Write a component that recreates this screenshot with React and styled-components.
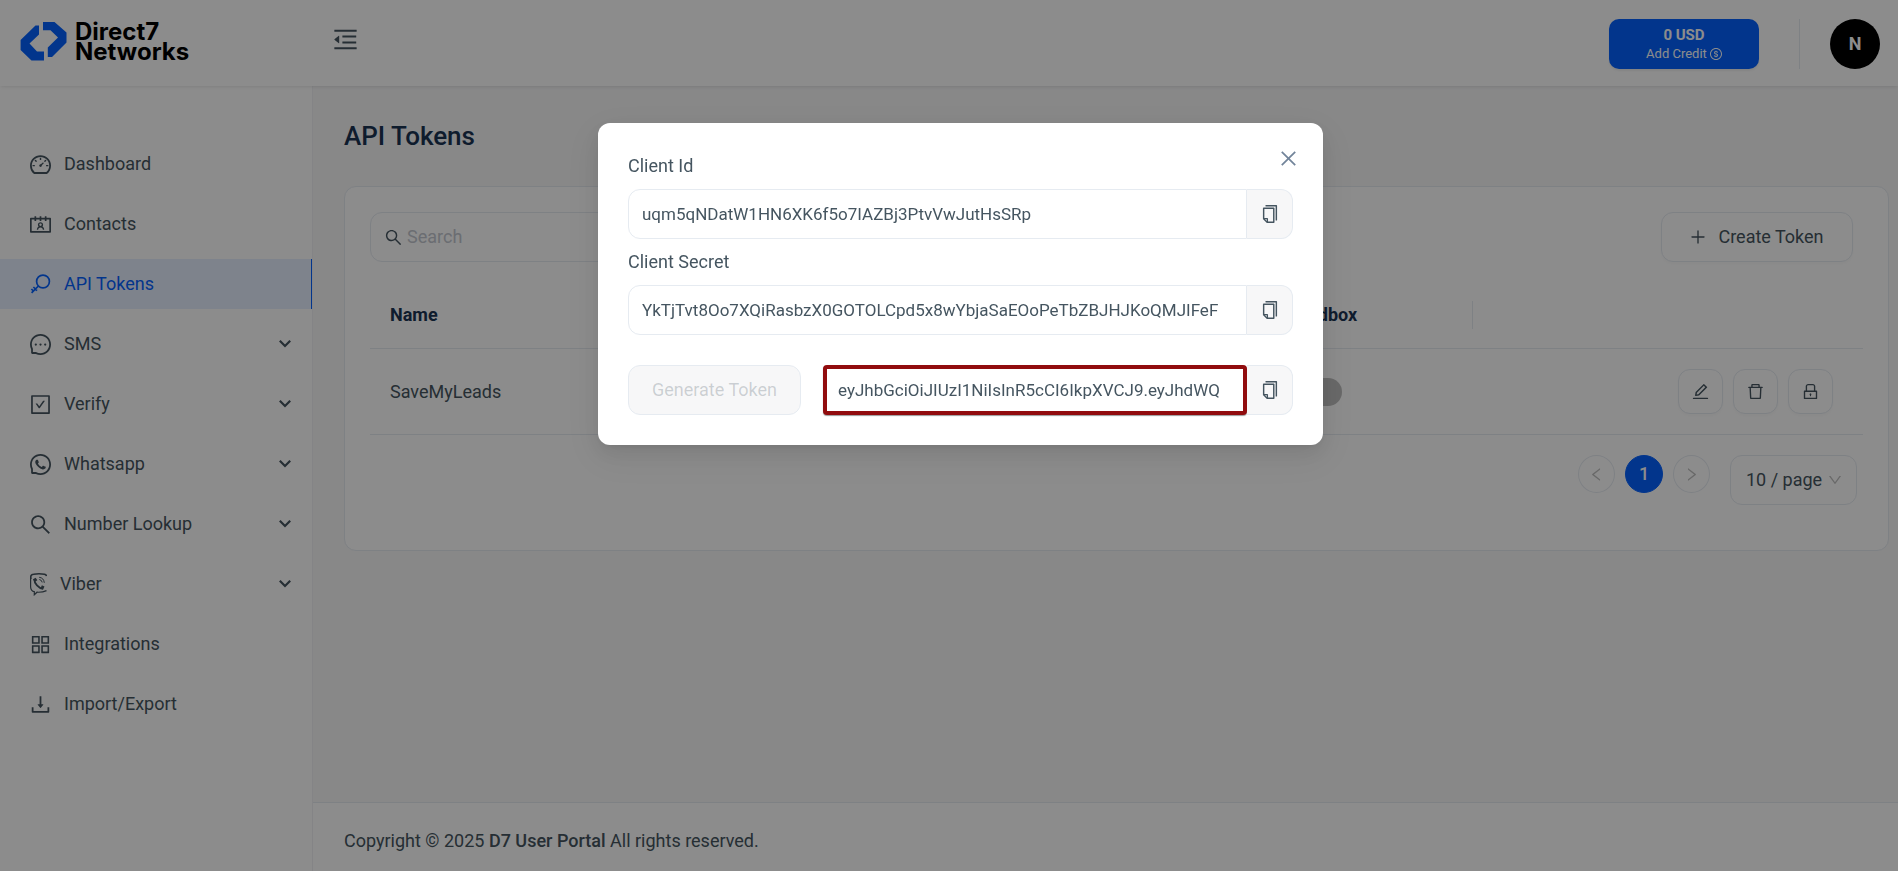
import React from "react";
import styled, { createGlobalStyle } from "styled-components";
import {
  AiOutlineDashboard, AiOutlineContacts, AiOutlineMessage, AiOutlineCheckSquare,
  AiOutlineWhatsApp, AiOutlineSearch, AiOutlineAppstore, AiOutlineDownload, AiOutlineMenuFold,
  AiOutlineDollar, AiOutlinePlus, AiOutlineEdit, AiOutlineDelete, AiOutlineLock, AiOutlineLeft,
  AiOutlineRight, AiOutlineDown, AiOutlineCopy, AiOutlineClose,
} from "react-icons/ai";

const c = {
  text: "#455560",
  heading: "#1a3353",
  border: "#e6ebf1",
  primary: "#0562ff",
  muted: "#72849a",
  page: "#f7f7f8",
};

const GlobalStyle = createGlobalStyle`
  *, *::before, *::after { box-sizing: border-box; }
  body {
    margin: 0;
    font-family: Roboto, "Liberation Sans", sans-serif;
    font-size: 18px;
    line-height: 26px;
    color: ${c.text};
    background: ${c.page};
  }
  button, input, select { font: inherit; color: inherit; margin: 0; }
  button { cursor: pointer; }
  a { color: inherit; text-decoration: none; }
  svg { display: block; flex: none; }
`;

const Page = styled.div`
  min-height: 100vh;
  display: flex;
  flex-direction: column;
`;

const Header = styled.header`
  height: 86px;
  padding-top: 2px;
  display: flex;
  align-items: center;
  background: #fff;
  box-shadow: 0 1px 4px -1px rgba(0, 0, 0, 0.15);
  z-index: 1;
`;

const Logo = styled.a`
  width: 313px;
  height: 84px;
  padding: 18px 20px 0;
  display: flex;
  align-items: flex-start;
  gap: 8px;
`;

const Wordmark = styled.span`
  padding-top: 2px;
  display: flex;
  flex-direction: column;
  font-family: Inter, "Liberation Sans", sans-serif;
  font-weight: 700;
  font-size: 24px;
  line-height: 20px;
  color: #000;
`;

const FoldButton = styled.button`
  margin: 0 auto 10px 20px;
  padding: 0;
  border: 0;
  background: none;
`;

const CreditButton = styled.button`
  width: 150px;
  height: 50px;
  margin-right: 40px;
  border: 0;
  border-radius: 10px;
  background: ${c.primary};
  color: #fff;
  box-shadow: 0 2px 2px rgba(0, 0, 0, 0.06);
  display: flex;
  flex-direction: column;
  align-items: center;
  justify-content: center;
  font-size: 13px;
  line-height: 18px;
`;

const Balance = styled.strong`
  font-size: 15px;
  line-height: 20px;
  font-weight: 700;
`;

const CreditLine = styled.span`
  display: flex;
  align-items: center;
  gap: 3px;
`;

const Divider = styled.span`
  width: 1px;
  height: 50px;
  margin-right: 30px;
  background: ${c.border};
`;

const Avatar = styled.button`
  width: 50px;
  height: 50px;
  margin-right: 18px;
  padding: 0;
  border: 0;
  border-radius: 50%;
  background: #000;
  color: #fff;
  font-weight: 700;
`;

const Body = styled.div`
  flex: 1;
  display: flex;
`;

const Sidebar = styled.nav`
  flex: none;
  width: 313px;
  background: #fff;
  border-right: 1px solid #f0f1f4;
`;

const Menu = styled.ul`
  list-style: none;
  margin: 0;
  padding: 53px 0 0;
  display: flex;
  flex-direction: column;
  gap: 10px;
`;

const MenuLink = styled.a`
  height: 50px;
  padding: 0 20px 0 30px;
  display: flex;
  align-items: center;
  gap: 13px;
  color: ${(p) => (p.$active ? c.primary : c.text)};
  background: ${(p) => (p.$active ? "#e6efff" : "transparent")};
  border-right: 1px solid ${(p) => (p.$active ? c.primary : "transparent")};
`;

const Caret = styled.svg`
  margin-left: auto;
`;

const Main = styled.main`
  flex: 1;
  min-width: 0;
  display: flex;
  flex-direction: column;
`;

const Content = styled.div`
  flex: 1;
  padding: 34px 9px 30px 31px;
`;

const Title = styled.h1`
  margin: 0 0 34px;
  font-size: 26px;
  line-height: 32px;
  font-weight: 500;
  color: ${c.heading};
`;

const Card = styled.section`
  padding: 25px;
  background: #fff;
  border: 1px solid ${c.border};
  border-radius: 12px;
`;

const Toolbar = styled.div`
  display: flex;
  justify-content: space-between;
  padding-right: 10px;
  margin-bottom: 20px;
`;

const SearchBox = styled.label`
  width: 370px;
  height: 50px;
  padding: 0 14px;
  display: flex;
  align-items: center;
  gap: 5px;
  border: 1px solid ${c.border};
  border-radius: 12px;
`;

const SearchInput = styled.input`
  flex: 1;
  min-width: 0;
  padding: 0;
  border: 0;
  outline: 0;
  background: none;
  &::placeholder { color: #c3c7cf; opacity: 1; }
`;

const CreateButton = styled.button`
  width: 192px;
  height: 50px;
  display: flex;
  align-items: center;
  justify-content: center;
  gap: 12px;
  background: #fff;
  border: 1px solid ${c.border};
  border-radius: 12px;
  box-shadow: 0 2px 2px rgba(0, 0, 0, 0.02);
`;

const Table = styled.table`
  width: 100%;
  table-layout: fixed;
  border-collapse: separate;
  border-spacing: 0;
`;

const Th = styled.th`
  position: relative;
  width: ${(p) => p.$width || "auto"};
  height: 67px;
  padding: 0 20px;
  text-align: left;
  font-weight: 700;
  color: ${c.heading};
  border-bottom: 1px solid ${c.border};
  &:not(:last-child)::after {
    content: "";
    position: absolute;
    top: 19px;
    right: 0;
    width: 1px;
    height: 28px;
    background: ${c.border};
  }
`;

const Td = styled.td`
  height: 86px;
  padding: 0 20px;
  border-bottom: 1px solid ${c.border};
`;

const Toggle = styled.input`
  appearance: none;
  display: block;
  width: 55px;
  height: 28px;
  margin: 0;
  border-radius: 14px;
  background: #bfbfbf;
`;

const RowActions = styled.div`
  display: flex;
  justify-content: flex-end;
  gap: 10px;
  padding-right: 10px;
`;

const IconButton = styled.button`
  width: 45px;
  height: 45px;
  padding: 0;
  display: grid;
  place-items: center;
  background: #fff;
  border: 1px solid ${c.border};
  border-radius: 12px;
  box-shadow: 0 2px 2px rgba(0, 0, 0, 0.02);
`;

const Pagination = styled.nav`
  display: flex;
  justify-content: flex-end;
  gap: 10px;
  padding: 20px 6px 20px 0;
`;

const PageButton = styled.button`
  width: ${(p) => (p.$current ? "38px" : "37px")};
  height: 38px;
  padding: 0;
  display: grid;
  place-items: center;
  border-radius: 50%;
  border: 1px solid ${(p) => (p.$current ? c.primary : c.border)};
  background: ${(p) => (p.$current ? c.primary : "#fff")};
  color: ${(p) => (p.$current ? "#fff" : "#bfbfbf")};
  font-weight: 500;
`;

const SizeBox = styled.div`
  width: 127px;
  height: 50px;
  margin-left: 10px;
  padding-right: 14px;
  display: flex;
  align-items: center;
  border: 1px solid ${c.border};
  border-radius: 12px;
  color: #bfbfbf;
`;

const SizeSelect = styled.select`
  flex: 1;
  min-width: 0;
  height: 48px;
  padding: 0 0 0 15px;
  appearance: none;
  border: 0;
  background: none;
  color: ${c.text};
`;

const Footer = styled.footer`
  height: 69px;
  padding: 7px 31px 0;
  display: flex;
  align-items: center;
  border-top: 1px solid ${c.border};
  background: #fff;
`;

const FooterBrand = styled.strong`
  font-weight: 500;
`;

const Overlay = styled.div`
  position: fixed;
  inset: 0;
  z-index: 10;
  padding-top: 123px;
  display: flex;
  justify-content: center;
  align-items: flex-start;
  background: rgba(0, 0, 0, 0.45);
`;

const Dialog = styled.div`
  position: relative;
  width: 725px;
  margin-left: 23px;
  padding: 30px;
  display: flex;
  flex-direction: column;
  gap: 10px;
  background: #fff;
  border-radius: 12px;
  box-shadow: 0 4px 8px -5px rgba(0, 0, 0, 0.12), 0 8px 20px rgba(0, 0, 0, 0.08), 0 11px 35px 10px rgba(0, 0, 0, 0.05);
`;

const CloseButton = styled.button`
  position: absolute;
  top: 20px;
  right: 20px;
  width: 30px;
  height: 30px;
  padding: 0;
  display: grid;
  place-items: center;
  border: 0;
  background: none;
  color: ${c.muted};
`;

const FieldLabel = styled.label`
  align-self: flex-start;
`;

const InputGroup = styled.div`
  flex: 1;
  min-width: 0;
  height: 50px;
  display: flex;
`;

const TextInput = styled.input`
  flex: 1;
  min-width: 0;
  height: 50px;
  padding: ${(p) => (p.$marked ? "0 11px" : "0 13px")};
  font-size: 17px;
  outline: 0;
  background: #fff;
  border: ${(p) => (p.$marked ? "4px solid #910c0e" : `1px solid ${c.border}`)};
  border-radius: ${(p) => (p.$marked ? "4px" : "12px 0 0 12px")};
  box-shadow: ${(p) => (p.$marked ? "0 1px 1px rgba(0, 0, 0, 0.4)" : "none")};
`;

const CopyButton = styled.button`
  width: 46px;
  height: 50px;
  padding: 0;
  display: grid;
  place-items: center;
  background: #f7f7f8;
  border: 1px solid ${c.border};
  border-left: 0;
  border-radius: 0 12px 12px 0;
`;

const TokenRow = styled.div`
  display: flex;
  gap: 22px;
  margin-top: 20px;
`;

const GenerateButton = styled.button`
  width: 173px;
  height: 50px;
  padding: 0;
  background: #f7f7f8;
  border: 1px solid ${c.border};
  border-radius: 12px;
  color: rgba(69, 85, 96, 0.25);
`;

const Glyph = ({ icon: Icon, size }) => <Icon size={size} viewBox="64 64 896 896" aria-hidden="true" />;

const KeyIcon = () => (
  <svg width="21" height="21" viewBox="0 0 21 21" fill="none" stroke="currentColor" strokeWidth="1.7" aria-hidden="true">
    <circle cx="13" cy="7.5" r="6.4" />
    <path d="M8.4 12L1.6 18.8M5.4 15L3.4 13M3.4 17L1.4 15M5.4 15L7 16.600" />
  </svg>
);

const ViberIcon = () => (
  <svg width="17" height="23" viewBox="0 0 17 23" fill="none" stroke="currentColor" aria-hidden="true">
    <path d="M.8 6V3.500Q1 1.500 3.500 1.200Q9 .4 14.500 1.200Q16.200 1.700 16.600 3" strokeWidth="1.600" />
    <path d="M.6 5V14Q.8 18 4.300 18.700V21.800L7 19.200Q12.500 19.500 16.500 17.600" strokeWidth="1.200" />
    <path d="M4.300 6.200C4.300 10.500 8.500 15.300 13 15.800" strokeWidth="1.800" />
    <path d="M4.300 5.500l1.700 2.700M11.200 13.800l2.600 1.200" strokeWidth="3.200" />
    <path d="M9.200 4.300Q13.800 4.800 14.300 9.800M9.300 6.500Q11.900 7 12.200 9.400" strokeWidth="1" />
  </svg>
);

const CaretIcon = () => (
  <Caret width="12" height="8" viewBox="0 0 12 8" fill="none" stroke="currentColor" strokeWidth="2.200" aria-hidden="true">
    <path d="M.8 .8L6 6L11.200 .8" />
  </Caret>
);

const menu = [
  { label: "Dashboard", icon: AiOutlineDashboard },
  { label: "Contacts", icon: AiOutlineContacts },
  { label: "API Tokens", drawing: <KeyIcon />, active: true },
  { label: "SMS", icon: AiOutlineMessage, sub: true },
  { label: "Verify", icon: AiOutlineCheckSquare, sub: true },
  { label: "Whatsapp", icon: AiOutlineWhatsApp, sub: true },
  { label: "Number Lookup", icon: AiOutlineSearch, sub: true },
  { label: "Viber", drawing: <ViberIcon />, sub: true },
  { label: "Integrations", icon: AiOutlineAppstore },
  { label: "Import/Export", icon: AiOutlineDownload },
];

const CopyField = ({ id, value, label, marked }) => (
  <InputGroup>
    <TextInput id={id} defaultValue={value} aria-label={label} readOnly $marked={marked} />
    <CopyButton type="button" aria-label="Copy"><Glyph icon={AiOutlineCopy} size={18} /></CopyButton>
  </InputGroup>
);

export default function App() {
  return (
    <>
      <GlobalStyle />
      <Page>
        <Header>
          <Logo href="#">
            <svg width="47" height="42" viewBox="0 0 47 42" fill={c.primary} aria-hidden="true">
              <path d="M15.500 5.500H19V14.500L9.500 23.500L17 31.500H24V40.500H11.500L.6 30V20Z" />
              <path d="M23 2H34.500L46.500 12.500V22.500L32 37H27.800V27.500L38 17.500L30.500 10.200H23Z" />
            </svg>
            <Wordmark><span>Direct7</span><span>Networks</span></Wordmark>
          </Logo>
          <FoldButton type="button" aria-label="Fold menu"><Glyph icon={AiOutlineMenuFold} size={25} /></FoldButton>
          <CreditButton type="button">
            <Balance>0 USD</Balance>
            <CreditLine>Add Credit <Glyph icon={AiOutlineDollar} size={12} /></CreditLine>
          </CreditButton>
          <Divider />
          <Avatar type="button">N</Avatar>
        </Header>
        <Body>
          <Sidebar>
            <Menu>
              {menu.map((m) => (
                <li key={m.label}>
                  <MenuLink href="#" $active={m.active}>
                    {m.drawing || <Glyph icon={m.icon} size={21} />}
                    {m.label}
                    {m.sub && <CaretIcon />}
                  </MenuLink>
                </li>
              ))}
            </Menu>
          </Sidebar>
          <Main>
            <Content>
              <Title>API Tokens</Title>
              <Card>
                <Toolbar>
                  <SearchBox>
                    <Glyph icon={AiOutlineSearch} size={17} />
                    <SearchInput type="text" placeholder="Search" aria-label="Search" />
                  </SearchBox>
                  <CreateButton type="button"><Glyph icon={AiOutlinePlus} size={16} />Create Token</CreateButton>
                </Toolbar>
                <Table>
                  <thead>
                    <tr>
                      <Th>Name</Th>
                      <Th $width="206px">Sandbox</Th>
                      <Th $width="390px" aria-label="Actions" />
                    </tr>
                  </thead>
                  <tbody>
                    <tr>
                      <Td>SaveMyLeads</Td>
                      <Td><Toggle type="checkbox" role="switch" aria-label="Sandbox" /></Td>
                      <Td>
                        <RowActions>
                          <IconButton type="button" aria-label="Edit"><Glyph icon={AiOutlineEdit} size={17} /></IconButton>
                          <IconButton type="button" aria-label="Delete"><Glyph icon={AiOutlineDelete} size={17} /></IconButton>
                          <IconButton type="button" aria-label="Lock"><Glyph icon={AiOutlineLock} size={17} /></IconButton>
                        </RowActions>
                      </Td>
                    </tr>
                  </tbody>
                </Table>
                <Pagination aria-label="Pages">
                  <PageButton type="button" aria-label="Previous"><Glyph icon={AiOutlineLeft} size={15} /></PageButton>
                  <PageButton type="button" $current>1</PageButton>
                  <PageButton type="button" aria-label="Next"><Glyph icon={AiOutlineRight} size={15} /></PageButton>
                  <SizeBox>
                    <SizeSelect aria-label="Rows per page"><option>10 / page</option></SizeSelect>
                    <Glyph icon={AiOutlineDown} size={14} />
                  </SizeBox>
                </Pagination>
              </Card>
            </Content>
            <Footer>
              <span>Copyright © 2025 <FooterBrand>D7 User Portal</FooterBrand> All rights reserved.</span>
            </Footer>
          </Main>
        </Body>
      </Page>
      <Overlay>
        <Dialog role="dialog" aria-modal="true" aria-label="Client credentials">
          <CloseButton type="button" aria-label="Close"><Glyph icon={AiOutlineClose} size={19} /></CloseButton>
          <FieldLabel htmlFor="client-id">Client Id</FieldLabel>
          <CopyField id="client-id" value="uqm5qNDatW1HN6XK6f5o7IAZBj3PtvVwJutHsSRp" />
          <FieldLabel htmlFor="client-secret">Client Secret</FieldLabel>
          <CopyField id="client-secret" value="YkTjTvt8Oo7XQiRasbzX0GOTOLCpd5x8wYbjaSaEOoPeTbZBJHJKoQMJIFeF" />
          <TokenRow>
            <GenerateButton type="button" disabled>Generate Token</GenerateButton>
            <CopyField id="token" label="Token" value="eyJhbGciOiJIUzI1NiIsInR5cCI6IkpXVCJ9.eyJhdWQ" marked />
          </TokenRow>
        </Dialog>
      </Overlay>
    </>
  );
}
